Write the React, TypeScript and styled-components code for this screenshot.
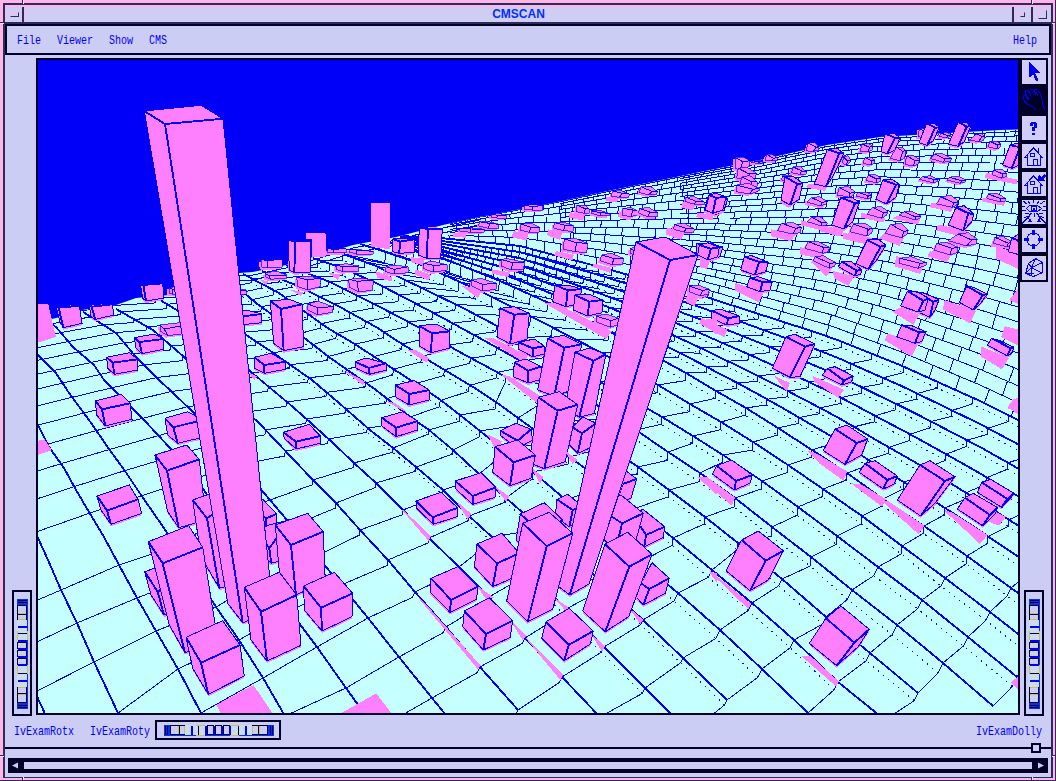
import React from "react";
import styled, { createGlobalStyle } from "styled-components";

const INK = "#000028";
const EDGE = "#2c2c5c";
const PANEL = "#cccdf5";
const ROSE = "#ffb6e6";
const BLUE = "#0000f8";
const PINK = "#ff80ff";
const ICE = "#c6ffff";

const Global = createGlobalStyle`
  * { box-sizing: border-box; }
  body { margin: 0; background: ${ROSE}; overflow: hidden; }
  svg { display: block; }
`;

const Frame = styled.div`
  position: relative;
  width: 1056px;
  height: 781px;
  padding: 3px 4px 3px 3px;
  background: ${ROSE};
  border-bottom: 1px solid ${EDGE};
  border-right: 1px solid ${EDGE};
  overflow: hidden;
`;
const Window = styled.div`
  display: flex;
  flex-direction: column;
  width: 1050px;
  height: 775px;
  border: 2px solid ${EDGE};
  border-bottom-width: 1px;
  background: ${PANEL};
`;
const Notch = styled.i<{ $x: number; $y: number; $v?: boolean }>`
  position: absolute;
  left: ${(p) => p.$x}px;
  top: ${(p) => p.$y}px;
  width: ${(p) => (p.$v ? 2 : 4)}px;
  height: ${(p) => (p.$v ? 4 : 2)}px;
  background: ${EDGE};
  border-${(p) => (p.$v ? "right" : "bottom")}: 1px solid #ffdcf4;
`;
const TitleBar = styled.header`
  display: flex;
  height: 19px;
  flex: none;
  border-top: 2px solid ${ROSE};
  border-bottom: 2px solid ${EDGE};
  background: #d0cdf4;
`;
const Title = styled.h1`
  flex: 1;
  margin: 0;
  border-left: 1px solid ${ROSE};
  text-align: center;
  font: bold 12px/14px "Liberation Sans", sans-serif;
  color: #0030ff;
`;
const TitleButton = styled.button<{ $side: "left" | "right" }>`
  display: flex;
  align-items: center;
  justify-content: center;
  width: 19px;
  padding: 0;
  background: none;
  border: 0;
  border-left: ${(p) => (p.$side === "left" ? `1px solid ${ROSE}` : `2px solid ${EDGE}`)};
  border-right: ${(p) => (p.$side === "left" ? `2px solid ${EDGE}` : "0")};
  box-shadow: ${(p) => (p.$side === "right" ? `inset 1px 0 ${ROSE}` : "none")};
  &:last-child { width: 20px; }
`;
const Bevel = styled.span<{ $w: number; $h: number }>`
  width: ${(p) => p.$w}px;
  height: ${(p) => p.$h}px;
  border: 1px solid ${ROSE};
  border-right-color: ${EDGE};
  border-bottom-color: ${EDGE};
`;
const Label = styled.span`
  font: 10px/12px "Liberation Mono", monospace;
  color: ${BLUE};
  transform: scaleY(1.28);
  white-space: pre;
`;
const MenuBar = styled.nav`
  display: flex;
  align-items: center;
  gap: 16px;
  height: 31px;
  flex: none;
  padding: 2px 12px 0 10px;
  border: 2px solid ${INK};
  ${Label}:last-child { margin-left: auto; }
`;
const Workspace = styled.main`
  display: flex;
  height: 662px;
  flex: none;
  padding: 3px 0 1px;
`;
const WheelColumn = styled.div<{ $pad: number }>`
  display: flex;
  align-items: flex-end;
  width: ${(p) => (p.$pad === 7 ? 31 : 30)}px;
  padding-left: ${(p) => p.$pad}px;
`;
const RightRail = styled.div`
  display: flex;
  flex-direction: column;
  justify-content: space-between;
  width: 30px;
`;
const Viewport = styled.div`
  width: 982px;
  height: 657px;
  border: 2px solid ${INK};
  border-right: 0;
  background: ${BLUE};
`;
const ViewEdge = styled.div`
  width: 2px;
  height: 657px;
  margin-right: -2px;
  background: ${INK};
`;
const Toolbar = styled.div`
  display: flex;
  flex-direction: column;
  gap: 4px;
  width: 30px;
  height: 224px;
  padding: 2px 2px 2px 4px;
  background: ${INK};
`;
const Tool = styled.button<{ $active?: boolean }>`
  width: 24px;
  height: 24px;
  flex: none;
  padding: 0;
  border: 0;
  background: ${(p) => (p.$active ? INK : "#d0cdf8")};
`;
const WheelBox = styled.div<{ $across?: boolean }>`
  width: ${(p) => (p.$across ? 126 : 20)}px;
  height: ${(p) => (p.$across ? 20 : 126)}px;
  flex: none;
  padding: ${(p) => (p.$across ? "3px 0 0 7px" : "7px 0 0 3px")};
  border: 2px solid ${INK};
`;
const WheelRow = styled.footer`
  display: flex;
  align-items: center;
  height: 30px;
  flex: none;
  padding: 0 9px;
  gap: 16px;
  ${WheelBox} { margin-left: -11px; margin-top: -4px; }
  ${Label} { margin-top: -1px; }
  ${Label}:last-child { margin-left: auto; }
`;
const SashLine = styled.div`
  position: relative;
  height: 2px;
  flex: none;
  background: ${INK};
`;
const SashGrip = styled.span`
  position: absolute;
  right: 10px;
  top: -4px;
  width: 10px;
  height: 10px;
  border: 2px solid ${INK};
  background: ${PANEL};
`;
const ScrollBar = styled.div`
  display: flex;
  align-items: center;
  justify-content: space-between;
  width: 1040px;
  height: 15px;
  margin: 9px 0 0 3px;
  background: ${INK};
`;
const Trough = styled.div`
  width: 1008px;
  height: 7px;
  background: ${PANEL};
`;
const Arrow = styled.svg`
  width: 16px;
  height: 15px;
  fill: ${PANEL};
`;

/* ---------- thumb wheels ---------- */

// [offset, length, colour] of each stripe across the wheel
const stripes: [number, number, string][] = [
  [0, 1, "#0030ff"], [1, 1, INK], [2, 1, "#0030ff"], [3, 1, INK], [4, 2, "#0030ff"],
  [27, 2, BLUE], [34, 1, INK], [41, 2, BLUE], [49, 2, BLUE], [57, 2, BLUE], [65, 2, BLUE], [74, 1, INK], [81, 2, BLUE],
  [104, 2, "#0030ff"], [106, 1, INK], [107, 1, "#0030ff"], [108, 1, INK], [109, 1, "#0030ff"],
];
const windows: [number, number][] = [[6, 9], [15, 5], [43, 6], [51, 6], [59, 6], [88, 6], [94, 9]];

function Wheel({ across }: { across?: boolean }) {
  const shape = (
    <>
      <rect width={11} height={110} fill="#ccdcf0" />
      <rect x={10} width={1} height={110} fill="#0030ff" />
      <rect x={0} y={0} width={1} height={6} fill="#0030ff" />
      <rect x={0} y={104} width={1} height={6} fill="#0030ff" />
      {windows.map(([y, h]) => (
        <g key={y}>
          <rect x={0} y={y} width={10} height={h + 1} fill={INK} />
          <rect x={1} y={y + 1} width={8} height={h - 1} fill={PANEL} />
        </g>
      ))}
      {[14, 20, 88, 95].map((y) => <rect key={y} x={1} y={y} width={8} height={1} fill="#cdbe5a" />)}
      {[32, 66].map((y) => (
        <g key={y} fill="#cdbe5a">
          <rect x={0} y={y} width={1} height={9} />
          <rect x={10} y={y} width={1} height={9} />
        </g>
      ))}
      {stripes.map(([y, h, c]) => <rect key={y} x={1} y={y} width={9} height={h} fill={c} />)}
    </>
  );
  return across ? (
    <svg width={110} height={11}><g transform="matrix(0 1 1 0 0 0)">{shape}</g></svg>
  ) : (
    <svg width={11} height={110}>{shape}</svg>
  );
}

/* ---------- terrain ---------- */

type P = [number, number];

// y of a polyline at x, continuing the end segments past both ends
const along = (pts: P[], x: number) => {
  let i = 1;
  while (i < pts.length - 1 && pts[i][0] < x) i++;
  const [a, b] = [pts[i - 1], pts[i]];
  return a[1] + ((x - a[0]) * (b[1] - a[1])) / (b[0] - a[0]);
};

const ridge: P[] = [
  [30, 324], [56, 318], [82, 310], [116, 305], [136, 298], [169, 295], [239, 273], [253, 272], [286, 265],
  [313, 257], [353, 245], [396, 237], [443, 225], [479, 217], [543, 205], [603, 192], [700, 172],
  [760, 160], [827, 145], [880, 137], [1000, 130], [1030, 129],
];

// Every furrow: its first crossing index, the crossings (right to left), then the path up to the ridge.
const furrows: { j: number; nodes: P[]; tail: P[] }[] = [
  { j: 4, nodes: [[57, 740], [35, 692], [20, 650], [5, 614], [-8, 582], [-20, 552], [-32, 524]], tail: [[-60, 460], [-100, 400]] },
  { j: 3, nodes: [[137, 755], [118, 713], [94, 662], [77, 623], [61, 590], [48, 560], [38, 538], [27, 510]], tail: [[0, 450], [-30, 390]] },
  { j: 3, nodes: [[201, 713], [178, 669], [156, 631], [137, 598], [119, 565], [104, 537], [89, 512], [76, 490], [64, 468], [49, 447]], tail: [[38, 425], [20, 395], [0, 360]] },
  { j: 2, nodes: [[285, 716], [263, 678], [239, 640], [216, 607], [196, 575], [176, 546], [157, 518], [139, 492], [125, 471]], tail: [[109, 449], [89, 420], [69, 393], [56, 373], [38, 355], [10, 328]] },
  { j: 1, nodes: [[376, 730], [346, 688], [317, 647], [290, 611], [266, 578], [244, 547], [223, 517], [203, 489]], tail: [[170, 448], [144, 420], [126, 402], [104, 380], [94, 365], [73, 347], [56, 327], [38, 315]] },
  { j: 0, nodes: [[467, 741], [432, 698], [399, 657], [368, 618], [341, 585], [317, 556], [292, 526], [270, 500], [249, 475]], tail: [[193, 412], [172, 392], [159, 380], [136, 357], [116, 333], [83, 312]] },
  { j: 0, nodes: [[518, 710], [480, 667], [446, 627], [415, 592], [388, 560], [360, 530], [336, 503], [313, 480], [293, 459]], tail: [[258, 422], [184, 357], [153, 330], [116, 309]] },
  { j: -1, nodes: [[600, 717], [562, 677], [525, 638], [489, 597], [459, 567], [429, 538], [403, 510], [376, 483], [354, 463], [333, 443], [312, 424]], tail: [[293, 407], [251, 372], [190, 318], [160, 300]] },
  { j: -2, nodes: [[690, 733], [645, 688], [604, 647], [566, 609], [528, 571], [492, 537], [469, 516], [443, 490], [416, 467], [393, 448], [370, 430]], tail: [[339, 403], [312, 380], [269, 350], [246, 335], [200, 300]] },
  { j: -2, nodes: [[727, 700], [683, 658], [643, 620], [605, 585], [570, 553], [537, 525], [506, 498], [479, 474], [453, 450], [429, 430], [409, 416]], tail: [[376, 390], [329, 357], [303, 337], [256, 303], [243, 292], [225, 280]] },
  { j: -3, nodes: [[808, 713], [762, 669], [720, 630], [678, 593], [640, 562], [603, 531], [566, 500], [533, 472], [503, 449], [480, 431], [460, 415], [438, 398]], tail: [[398, 372], [353, 343], [326, 327], [279, 293], [243, 274]] },
  { j: -4, nodes: [[885, 720], [838, 682], [794, 640], [752, 603], [712, 570], [673, 538], [636, 508], [602, 480], [569, 457], [543, 436], [518, 418], [496, 402], [473, 387]], tail: [[428, 360], [399, 342], [376, 327], [340, 307], [300, 287], [262, 271]] },
  { j: -4, nodes: [[918, 693], [870, 653], [826, 617], [782, 579], [738, 543], [705, 517], [669, 490], [638, 467], [602, 442], [570, 421], [539, 400], [506, 377]], tail: [[456, 350], [433, 335], [401, 318], [376, 305], [330, 282], [286, 265]] },
  { j: -5, nodes: [[993, 706], [943, 663], [897, 625], [852, 590], [811, 557], [772, 527], [735, 498], [700, 473], [668, 452], [636, 430], [605, 410], [575, 392], [546, 375]], tail: [[519, 360], [494, 346], [443, 318], [409, 300], [376, 283], [345, 269], [313, 258]] },
  { j: -5, nodes: [[1017, 677], [968, 637], [922, 600], [878, 567], [837, 536], [798, 507], [762, 481], [723, 455], [693, 436], [662, 417], [631, 399], [600, 382], [571, 366]], tail: [[499, 327], [463, 308], [426, 290], [376, 266], [335, 251]] },
  { j: -5, nodes: [[1036, 648], [990, 612], [945, 578], [902, 546], [862, 516], [823, 489], [788, 465], [753, 442], [721, 422], [690, 404], [658, 385]], tail: [[600, 352], [540, 321], [480, 291], [440, 273], [400, 256], [360, 244]] },
  { j: -5, nodes: [[1056, 620], [1011, 588], [967, 556], [924, 526], [883, 499], [847, 473], [812, 450], [778, 428], [746, 408], [716, 391], [686, 373]], tail: [[620, 337], [560, 308], [500, 281], [440, 257], [380, 240]] },
];

const shelf: P[] = [[400, 236], [440, 238], [520, 246], [600, 267], [700, 295], [830, 337], [900, 365], [980, 401], [1040, 431]];

const LEFT_SIDE = 14;
const LAST_PLOTTED = 7;
const lines = furrows.map((f, i) => {
  const path = [...f.nodes, ...f.tail].sort((a, b) => a[0] - b[0]) as P[];
  const nodes = f.nodes.filter((_, k) => f.j + k <= LAST_PLOTTED);
  if (i >= LEFT_SIDE) {
    const end = path[0][0];
    let step = nodes[nodes.length - 2][0] - nodes[nodes.length - 1][0];
    let x = nodes[nodes.length - 1][0];
    while (nodes.length < 60) {
      step = Math.max(step * 0.925, 6.5);
      x -= step;
      if (x < end) break;
      nodes.push([x, along(path, x)]);
    }
  }
  return { j: f.j, path, nodes };
});
// Left of the hill every cross line runs on, falling gently, from the furrow on its right.
for (let i = LEFT_SIDE - 1; i >= 0; i--) {
  const own = lines[i];
  const from = lines[i + 1];
  for (let k = own.nodes.length; k < 60; k++) {
    const start = from.nodes[k + own.j - from.j];
    if (!start) break;
    let [x, y] = start;
    const gap = along(own.path, x) - y;
    if (i > 8) y += gap * 0.22;
    while (x > -160 && along(own.path, x) > y) {
      x -= 1;
      y += Math.max(0.12, 0.15 + ((y - 290) / 310) * 0.27);
    }
    own.nodes.push([x, y]);
  }
}
const edge = lines[16];
[0.21, 0.39, 0.56, 0.72, 0.86, 1].forEach((t, n) => {
  const path: P[] = [];
  for (let x = 400; x <= 1040; x += 20) path.push([x, along(edge.path, x) * (1 - t) + along(shelf, x) * t]);
  const nodes = edge.nodes
    .map(([x]) => x + (n + 1) * 21)
    .filter((x) => x > 410)
    .map((x) => [x, along(path, x)] as P);
  lines.push({ j: edge.j, path, nodes });
});

const poly = (pts: P[]) => "M" + pts.map((p) => `${p[0].toFixed(1)} ${p[1].toFixed(1)}`).join("L");

let boldLines = "";
let thinLines = "";
let dotLines = "";
lines.forEach((l, i) => {
  boldLines += poly(l.path);
  const next = lines[i + 1];
  if (!next) return;
  const dots: P[] = [];
  l.nodes.forEach((a, k) => {
    const b = next.nodes[k + l.j - next.j];
    if (!b) return;
    if (i < 5) {
      thinLines += poly([a, b]);
      return;
    }
    const d = Math.hypot(b[0] - a[0], b[1] - a[1]) * (i > 11 ? 0.25 : i > 8 ? 0.18 : 0.1);
    const kink: P = [b[0] - d * (b[1] > 560 ? 0.5 : 0.1), b[1] + d];
    thinLines += poly([a, kink, b]);
    dots.push(kink);
  });
  if (i >= 7 && dots.length > 1) dotLines += poly(dots);
});

// Brick courses between the shelf and the ridge; fewer of them where they crowd together
const ROWS = 25;
const courseY = (n: number, x: number) => {
  const r = along(ridge, x);
  return r + (along(shelf, x) - r) * Math.pow(1 - n / ROWS, 1.5);
};
const courseStart = (n: number) => (n % 2 ? 680 : n % 4 === 2 ? 560 : 450);
let courses = "";
for (let n = 0; n < ROWS; n++) {
  const pts: P[] = [];
  for (let x = courseStart(n); x <= 1030; x += 10) pts.push([x, courseY(n, x)]);
  courses += poly(pts);
  let x = courseStart(n) + ((n * 37) % 19);
  while (x < 1018) {
    const t = 1 - n / ROWS;
    const lean = (x - 560) * 0.012 * t;
    const up = x > 690 ? 1 : x > 570 ? 2 : 4;
    courses += poly([[x, courseY(n, x)], [x + lean, courseY(Math.min(n + up, ROWS), x + lean)]]);
    x += 8 + 13 * t * ((x - 260) / 500) + ((n * 7 + Math.round(x)) % 4);
  }
}
let skyline = "";
for (let n = 0; n < 2; n++) {
  skyline += poly(ridge.filter((p) => p[0] < 480 && p[0] > 230).map(([x, y]) => [x, y + 3 + n * 5] as P));
}

/* ---------- blocks: measured in thirds of a pixel from a patch corner ---------- */

// left, back, right and front corners of the lid, then the left, front and right feet
type Block = number[];
interface Patch { x: number; y: number; shadows: number[][]; blocks: Block[] }

const horizonPatch: Patch = {
  x: 36, y: 190,
  shadows: [[0, 345, 35, 342, 58, 440, 0, 458], [0, 755, 25, 750, 45, 780, 0, 795], [930, 545, 985, 575, 980, 583], [640, 550, 660, 560, 655, 567], [880, 250, 912, 255, 905, 268], [675, 270, 695, 276, 690, 284], [765, 300, 800, 308, 795, 316], [757, 150, 824, 153, 824, 240, 757, 240], [812, 130, 868, 132, 868, 198, 830, 200, 830, 145, 812, 145], [1005, 41, 1059, 41, 1059, 165, 1005, 170]],
  blocks: [
    [675, 209, 690, 209, 738, 209, 693, 211, 677, 232, 693, 234, 738, 232],
    [875, 176, 892, 176, 930, 176, 892, 178, 875, 188, 892, 189, 930, 188],
    [940, 178, 960, 178, 1012, 184, 960, 180, 940, 186, 960, 192, 1012, 192],
    [60, 350, 120, 343, 130, 347, 68, 353, 72, 395, 82, 413, 138, 400],
    [160, 345, 220, 340, 229, 343, 167, 350, 165, 380, 178, 388, 234, 375],
    [313, 283, 365, 278, 380, 280, 322, 285, 320, 325, 330, 333, 384, 324],
    [400, 292, 420, 290, 440, 293, 410, 298, 400, 310, 410, 313, 440, 313],
    [600, 298, 620, 297, 630, 300, 610, 304, 600, 315, 612, 316, 630, 312],
    [757, 150, 778, 150, 824, 153, 778, 154, 760, 240, 775, 248, 824, 246],
    [687, 250, 720, 243, 752, 255, 700, 258, 690, 262, 703, 268, 752, 264],
    [782, 262, 810, 258, 854, 264, 815, 270, 785, 290, 815, 300, 853, 290],
    [900, 225, 930, 221, 968, 228, 920, 230, 900, 238, 920, 245, 968, 243],
    [938, 268, 975, 264, 1012, 270, 963, 274, 940, 292, 968, 306, 1010, 300],
    [815, 342, 845, 334, 892, 350, 845, 353, 815, 360, 845, 374, 890, 367],
    [372, 405, 430, 398, 450, 405, 385, 417, 375, 425, 395, 437, 450, 430],
    [295, 443, 355, 432, 382, 447, 310, 456, 300, 475, 318, 491, 382, 478],
    [212, 502, 280, 488, 305, 508, 230, 518, 215, 535, 235, 553, 305, 540],
    [600, 370, 630, 360, 677, 372, 610, 380, 600, 395, 610, 405, 677, 398],
    [703, 333, 760, 328, 798, 343, 735, 357, 713, 460, 743, 482, 803, 470],
    [655, 502, 705, 490, 750, 515, 685, 525, 655, 535, 685, 550, 748, 538],
    [958, 515, 990, 504, 1050, 520, 998, 534, 960, 535, 1000, 553, 1052, 540],
    [178, 633, 255, 613, 282, 640, 198, 658, 182, 675, 208, 708, 288, 688],
    [387, 685, 455, 665, 500, 690, 412, 712, 395, 735, 425, 760, 500, 742],
    [742, 727, 820, 703, 853, 738, 780, 755, 745, 745, 780, 777, 853, 760],
  ],
};
const middlePatch: Patch = {
  x: 376, y: 190,
  shadows: [
    [330, 445, 350, 445, 453, 498, 445, 516], [378, 555, 400, 560, 490, 618, 480, 635], [510, 340, 535, 340, 705, 425, 690, 445],
    [262, 290, 285, 293, 312, 308, 305, 322], [120, 240, 163, 255, 158, 270, 118, 252], [105, 203, 145, 208, 140, 224, 105, 215],
    [97, 480, 120, 482, 158, 505, 150, 515], [35, 635, 60, 642, 90, 665], [335, 735, 375, 755, 368, 775], [415, 125, 455, 133, 450, 150, 408, 140],
    [518, 120, 558, 130, 550, 147, 515, 135], [540, 185, 592, 195, 588, 210, 536, 195], [655, 222, 705, 235, 700, 246, 650, 230],
    [935, 313, 965, 322, 955, 347, 930, 335], [975, 393, 1020, 385, 1020, 430], [235, 130, 270, 130, 268, 142, 232, 138],
    [350, 240, 400, 248, 395, 260, 350, 250], [0, 245, 45, 262, 45, 272, 5, 262], [875, 115, 925, 125, 915, 148, 870, 132],
    [583, 68, 625, 74, 620, 90, 580, 82], [730, 65, 765, 78, 762, 90, 728, 80], [920, 40, 955, 48, 950, 60, 918, 52], [690, 22, 725, 25, 722, 35, 690, 32],
    [965, 70, 1010, 75, 1010, 90, 962, 80], [6, 41, 40, 42, 40, 176, 5, 172], [130, 111, 198, 115, 196, 190, 128, 190],
  ],
  blocks: [
    [50, 147, 75, 145, 114, 148, 72, 155, 50, 185, 70, 190, 114, 187],
    [130, 112, 155, 114, 199, 116, 156, 118, 127, 195, 152, 205, 194, 205],
    [345, 72, 365, 70, 390, 76, 365, 76, 345, 82, 362, 84, 390, 84],
    [445, 45, 465, 44, 500, 46, 470, 50, 445, 58, 468, 60, 500, 60],
    [310, 95, 335, 94, 368, 103, 340, 100, 308, 108, 338, 115, 368, 114],
    [250, 115, 280, 113, 325, 118, 285, 117, 252, 124, 284, 127, 325, 126],
    [435, 102, 465, 100, 492, 112, 465, 112, 432, 120, 460, 127, 490, 126],
    [535, 98, 562, 96, 592, 106, 568, 106, 533, 115, 562, 122, 592, 124],
    [603, 46, 625, 45, 640, 57, 628, 56, 600, 65, 625, 70, 640, 70],
    [645, 62, 670, 60, 700, 70, 672, 68, 645, 70, 672, 77, 700, 78],
    [740, 55, 765, 53, 785, 62, 770, 60, 738, 75, 765, 80, 785, 74],
    [790, 55, 820, 53, 845, 68, 822, 66, 788, 70, 815, 80, 843, 80],
    [710, 3, 735, 2, 760, 12, 740, 10, 705, 18, 730, 22, 758, 22],
    [795, -10, 825, -10, 845, 5, 830, 5, 790, 8, 815, 14, 842, 12],
    [930, 22, 955, 20, 985, 35, 960, 34, 928, 35, 955, 42, 985, 44],
    [1000, 15, 1020, 10, 1050, 20, 1020, 24, 988, 60, 1010, 70, 1040, 60],
    [895, 103, 925, 100, 955, 117, 930, 115, 893, 118, 925, 126, 953, 127],
    [565, 147, 600, 146, 635, 160, 602, 158, 562, 178, 597, 185, 632, 188],
    [677, 195, 705, 190, 743, 205, 712, 205, 672, 212, 710, 225, 740, 222],
    [762, 175, 785, 172, 800, 185, 780, 185, 762, 190, 775, 195, 798, 198],
    [30, 230, 50, 225, 97, 230, 55, 238, 28, 245, 55, 252, 97, 248],
    [143, 220, 168, 213, 213, 224, 172, 226, 143, 236, 172, 246, 213, 241],
    [375, 208, 395, 206, 445, 217, 410, 218, 375, 228, 405, 240, 443, 238],
    [287, 270, 315, 265, 362, 280, 320, 283, 287, 288, 318, 303, 360, 298],
    [537, 285, 575, 285, 617, 297, 575, 301, 530, 335, 570, 350, 610, 340],
    [597, 315, 640, 313, 680, 330, 640, 335, 592, 360, 635, 378, 678, 368],
    [660, 378, 690, 372, 728, 385, 705, 392, 660, 395, 703, 412, 725, 405],
    [130, 407, 180, 402, 222, 424, 168, 430, 130, 468, 165, 488, 220, 475],
    [372, 355, 415, 350, 460, 370, 415, 374, 363, 440, 402, 462, 453, 448],
    [428, 457, 475, 447, 505, 468, 470, 475, 428, 478, 470, 500, 505, 492],
    [415, 517, 450, 507, 495, 530, 457, 542, 412, 560, 457, 579, 495, 568],
    [515, 445, 562, 436, 617, 463, 565, 473, 485, 600, 535, 618, 590, 600],
    [597, 487, 640, 474, 690, 493, 652, 512, 568, 650, 610, 682, 655, 670],
    [590, 712, 620, 680, 660, 700, 618, 730, 580, 765, 605, 790, 650, 770],
    [373, 722, 420, 700, 465, 718, 425, 752, 375, 738, 425, 775, 470, 750],
    [487, 622, 550, 605, 605, 644, 545, 662, 460, 818, 505, 836, 568, 815],
    [58, 585, 115, 572, 160, 600, 100, 612, 60, 622, 100, 645, 160, 630],
    [17, 683, 80, 665, 125, 693, 60, 713, 18, 708, 60, 740, 125, 720],
    [940, 288, 965, 285, 1000, 297, 980, 302, 940, 305, 972, 318, 998, 312],
    [970, 165, 995, 158, 1030, 172, 1005, 176, 965, 195, 995, 210, 1025, 200],
  ],
};
const rightPatch: Patch = {
  x: 700, y: 110,
  shadows: [
    [105, 520, 190, 548, 175, 575, 105, 540], [215, 360, 285, 372, 272, 392, 215, 378], [300, 412, 370, 435, 362, 445, 302, 432],
    [335, 455, 392, 480, 378, 498], [400, 485, 460, 500, 445, 525, 405, 505], [430, 370, 515, 385, 500, 402, 430, 385],
    [550, 375, 610, 385, 598, 406, 540, 385], [360, 345, 430, 362, 420, 378, 360, 362], [600, 595, 655, 615, 640, 643, 580, 605],
    [565, 672, 650, 705, 635, 738, 555, 690], [735, 572, 825, 605, 810, 638, 730, 598], [845, 712, 925, 745, 905, 776, 843, 738],
    [715, 345, 800, 365, 790, 380, 712, 360], [690, 425, 750, 438, 740, 455, 685, 438], [590, 440, 670, 462, 660, 490, 585, 468],
    [340, 800, 430, 840, 415, 862, 345, 815], [5, 625, 80, 660, 72, 680, 0, 640], [225, 800, 268, 820, 260, 842], [890, 410, 953, 435, 953, 475, 890, 445],
    [915, 650, 953, 660, 953, 705, 905, 680], [930, 570, 953, 540, 953, 580], [0, 445, 28, 455, 20, 475, 0, 470], [940, 870, 953, 865, 953, 900, 925, 895],
    [485, 310, 555, 325, 548, 336, 485, 322], [315, 275, 372, 285, 368, 293, 315, 284], [240, 275, 270, 285, 265, 292],
    [860, 190, 950, 210, 950, 222, 855, 203], [325, 222, 378, 232, 375, 241, 322, 232], [415, 252, 460, 262, 410, 262], [595, 318, 660, 330, 650, 342, 582, 325],
    [305, 333, 372, 350, 365, 360, 305, 345], [695, 280, 760, 292, 752, 304, 690, 290], [850, 265, 915, 275, 910, 286, 848, 273], [880, 395, 930, 408, 925, 415, 872, 408],
  ],
  blocks: [
    [105, 142, 130, 141, 150, 152, 128, 155, 105, 175, 120, 180, 148, 170],
    [115, 175, 140, 172, 170, 190, 148, 192, 110, 205, 140, 210, 165, 205],
    [125, 200, 150, 197, 172, 215, 155, 215, 120, 222, 150, 230, 172, 228],
    [110, 225, 145, 220, 178, 235, 158, 238, 108, 245, 150, 252, 178, 242],
    [200, 133, 215, 132, 232, 143, 220, 145, 195, 150, 215, 153, 232, 152],
    [158, 152, 180, 150, 188, 155, 178, 156, 155, 158, 175, 160, 188, 160],
    [325, 99, 345, 98, 357, 110, 348, 112, 318, 122, 340, 125, 356, 120],
    [487, 102, 505, 100, 518, 108, 508, 112, 480, 123, 505, 126, 516, 120],
    [495, 143, 512, 142, 525, 150, 515, 152, 488, 160, 515, 165, 522, 160],
    [722, 68, 740, 67, 752, 74, 742, 77, 718, 80, 740, 83, 750, 80],
    [658, 55, 668, 54, 678, 62, 670, 62, 655, 80, 665, 82, 675, 78],
    [830, 72, 845, 71, 855, 80, 847, 80, 808, 90, 835, 95, 850, 92],
    [870, 94, 890, 93, 903, 103, 893, 105, 865, 110, 890, 117, 900, 112],
    [705, 132, 725, 130, 755, 145, 735, 147, 690, 145, 730, 157, 752, 154],
    [620, 137, 640, 136, 660, 150, 645, 152, 615, 163, 640, 168, 655, 162],
    [555, 70, 584, 70, 600, 84, 585, 84, 543, 125, 562, 131, 585, 120],
    [590, 112, 608, 112, 618, 122, 608, 124, 570, 145, 600, 152, 614, 145],
    [680, 40, 704, 40, 718, 52, 705, 53, 657, 98, 682, 106, 700, 92],
    [775, 36, 799, 36, 813, 48, 800, 50, 745, 103, 775, 109, 792, 96],
    [930, 105, 950, 100, 990, 110, 960, 112, 908, 165, 935, 175, 970, 160],
    [882, 180, 905, 178, 920, 190, 908, 192, 875, 193, 905, 205, 918, 200],
    [668, 200, 690, 197, 715, 208, 700, 208, 658, 208, 700, 218, 712, 215],
    [748, 202, 775, 198, 797, 210, 785, 212, 740, 210, 780, 220, 795, 216],
    [278, 170, 300, 168, 320, 186, 305, 183, 275, 188, 300, 193, 318, 192],
    [247, 198, 270, 195, 285, 205, 275, 208, 245, 210, 275, 215, 285, 212],
    [430, 140, 445, 137, 452, 150, 442, 152, 428, 160, 440, 165, 452, 155],
    [382, 118, 412, 116, 432, 130, 418, 130, 343, 222, 378, 230, 398, 200],
    [505, 195, 525, 193, 543, 205, 530, 207, 498, 212, 528, 218, 540, 215],
    [255, 200, 278, 198, 308, 220, 292, 222, 243, 270, 270, 285, 298, 268],
    [548, 210, 575, 208, 598, 222, 588, 224, 528, 268, 560, 282, 588, 262],
    [418, 232, 445, 230, 465, 245, 450, 250, 412, 255, 448, 262, 460, 255],
    [475, 247, 498, 246, 515, 255, 505, 257, 468, 258, 502, 266, 513, 263],
    [335, 263, 360, 260, 382, 275, 365, 277, 320, 276, 362, 288, 378, 282],
    [518, 292, 545, 290, 565, 305, 550, 308, 500, 312, 545, 325, 560, 315],
    [612, 305, 635, 303, 662, 318, 645, 320, 598, 315, 645, 330, 660, 325],
    [722, 260, 755, 256, 775, 275, 760, 278, 710, 282, 758, 292, 770, 285],
    [865, 252, 890, 250, 917, 265, 902, 266, 860, 265, 902, 276, 915, 273],
    [25, 257, 58, 255, 83, 268, 68, 268, 12, 302, 45, 315, 72, 302],
    [422, 262, 455, 262, 478, 277, 465, 280, 395, 345, 432, 357, 458, 335],
    [335, 322, 360, 320, 382, 338, 365, 338, 322, 335, 365, 348, 380, 345],
    [245, 340, 280, 338, 305, 352, 287, 355, 232, 362, 280, 372, 300, 368],
    [460, 342, 495, 340, 518, 355, 505, 358, 450, 365, 500, 378, 515, 370],
    [572, 343, 605, 341, 625, 360, 612, 365, 555, 370, 605, 383, 622, 372],
    [768, 292, 792, 287, 822, 312, 805, 310, 745, 345, 790, 362, 815, 335],
    [775, 372, 805, 368, 832, 388, 815, 390, 745, 392, 800, 408, 828, 402],
    [710, 400, 740, 397, 775, 412, 755, 415, 702, 420, 750, 435, 770, 428],
    [325, 395, 350, 393, 388, 412, 370, 412, 315, 415, 368, 430, 385, 425],
    [345, 440, 370, 437, 408, 458, 390, 460, 340, 452, 388, 475, 404, 468],
    [425, 455, 455, 455, 485, 480, 470, 482, 415, 470, 465, 498, 482, 492],
    [502, 390, 535, 388, 558, 405, 542, 410, 467, 460, 505, 478, 530, 450],
    [600, 445, 635, 440, 680, 458, 660, 460, 598, 460, 655, 475, 678, 465],
    [885, 382, 910, 380, 935, 395, 925, 400, 880, 400, 922, 410, 932, 405],
    [935, 385, 960, 370, 980, 380, 955, 390, 925, 425, 960, 435, 975, 410],
    [-10, 400, 35, 400, 68, 412, 42, 413, -10, 435, 33, 448, 60, 440],
    [133, 440, 155, 437, 205, 457, 178, 456, 122, 480, 165, 495, 197, 485],
    [150, 503, 175, 500, 217, 515, 188, 516, 140, 530, 180, 545, 210, 540],
    [-10, 535, 5, 535, 28, 545, 10, 547, -10, 555, 10, 562, 26, 555],
    [35, 602, 60, 597, 118, 618, 85, 625, 35, 625, 80, 645, 118, 640],
    [650, 545, 675, 550, 717, 570, 700, 575, 640, 600, 690, 622, 705, 600],
    [622, 543, 655, 547, 685, 565, 670, 572, 602, 588, 655, 606, 675, 600],
    [605, 645, 635, 647, 678, 665, 658, 667, 590, 680, 645, 700, 665, 695],
    [800, 528, 820, 532, 862, 552, 848, 556, 778, 577, 820, 600, 842, 580],
    [875, 685, 895, 690, 942, 712, 932, 715, 862, 705, 922, 738, 935, 730],
    [258, 680, 285, 673, 345, 702, 315, 710, 217, 775, 270, 802, 300, 800],
    [382, 775, 405, 770, 460, 798, 432, 812, 367, 795, 425, 825, 455, 815],
  ],
};
const slopePatch: Patch = {
  x: 700, y: 400,
  shadows: [
    [0, 232, 20, 232, 103, 293, 95, 315], [328, 155, 345, 160, 440, 215, 430, 240, 360, 190], [458, 252, 480, 253, 556, 298, 545, 318],
    [550, 305, 565, 305, 672, 378, 655, 400], [735, 332, 755, 338, 860, 405, 840, 430], [870, 365, 890, 340, 915, 350, 897, 375],
    [30, 515, 50, 530, 152, 612, 145, 625], [306, 768, 330, 768, 415, 845, 408, 857], [925, 20, 940, 0, 955, -5, 955, 42], [935, 848, 955, 830, 955, 868],
  ],
  blocks: [
    [405, 87, 440, 75, 503, 117, 470, 129, 370, 152, 435, 193, 485, 165],
    [50, 197, 95, 180, 157, 225, 108, 243, 37, 222, 103, 270, 150, 250],
    [495, 190, 525, 182, 592, 228, 562, 240, 478, 217, 550, 267, 583, 252],
    [660, 195, 690, 182, 765, 230, 735, 243, 592, 300, 662, 348, 705, 310],
    [845, 247, 872, 238, 942, 280, 922, 297, 832, 277, 905, 322, 935, 290],
    [795, 293, 820, 280, 893, 323, 870, 345, 772, 327, 848, 377, 885, 343],
    [125, 420, 175, 393, 250, 452, 197, 482, 78, 512, 150, 572, 205, 540],
    [378, 655, 423, 618, 508, 688, 463, 728, 328, 730, 410, 797, 475, 740],
  ],
};
const frontPatch: Patch = {
  x: 376, y: 440,
  shadows: [
    [80, 210, 163, 288, 157, 300], [130, 475, 150, 495, 313, 678, 305, 685], [450, 593, 560, 705, 553, 718], [305, 440, 350, 472, 330, 475],
    [410, 550, 450, 588, 440, 598], [650, 588, 685, 618, 678, 632], [765, 510, 800, 540, 793, 550], [540, 478, 578, 505, 570, 512],
    [360, 143, 398, 170, 390, 182], [245, 188, 284, 222, 275, 235], [470, 88, 500, 112, 493, 128], [570, 35, 602, 60, 590, 70],
    [965, 110, 1020, 140, 1020, 160], [345, 0, 375, 18, 357, 22], [-102, 820, 0, 762, 45, 820], [1003, 398, 1020, 400, 1020, 422],
  ],
  blocks: [
    [357, 20, 425, 0, 478, 45, 413, 67, 350, 97, 402, 137, 465, 115],
    [238, 123, 315, 98, 360, 142, 290, 168, 240, 148, 290, 193, 357, 172],
    [120, 183, 195, 157, 245, 203, 170, 232, 120, 203, 172, 253, 243, 230],
    [543, 178, 575, 163, 620, 200, 590, 210, 538, 230, 580, 260, 610, 240],
    [433, 222, 505, 188, 560, 240, 500, 280, 420, 300, 480, 350, 540, 300],
    [710, 115, 750, 92, 782, 117, 740, 132, 695, 160, 720, 190, 765, 175],
    [775, 228, 800, 207, 866, 260, 810, 285, 765, 285, 805, 320, 862, 292],
    [670, 205, 735, 165, 802, 220, 738, 250, 650, 270, 720, 330, 780, 300],
    [303, 312, 378, 280, 430, 340, 363, 370, 295, 380, 350, 440, 415, 412],
  ],
};
const cornerPatch: Patch = {
  x: 36, y: 440,
  shadows: [[543, 795, 652, 737, 708, 820, 555, 820]],
  blocks: [
    [183, 168, 280, 135, 306, 178, 213, 212, 195, 210, 225, 253, 317, 220],
    [357, 45, 452, 15, 490, 58, 393, 92, 395, 215, 428, 263, 510, 240],
    [470, 180, 520, 162, 560, 200, 513, 235, 495, 350, 550, 445, 600, 430],
    [640, 200, 680, 178, 722, 222, 690, 235, 640, 260, 690, 260, 720, 300],
    [660, 270, 700, 255, 760, 240, 700, 325, 660, 325, 706, 370, 740, 360],
    [326, 395, 360, 383, 400, 430, 365, 455, 345, 465, 384, 525, 420, 515],
  ],
};
const towers: Patch = {
  x: 0, y: 0,
  shadows: [[436, 334, 603, 319, 666, 355, 666, 400, 450, 400]],
  blocks: [
    [433, 333, 603, 316, 669, 356, 495, 372, 683, 1810, 728, 1868, 820, 1835],
    [1908, 726, 1995, 711, 2094, 765, 2010, 780, 1676, 1760, 1709, 1785, 1767, 1752],
  ],
};
const foreground: Patch = {
  x: 36, y: 440,
  shadows: [],
  blocks: [
    [337, 305, 458, 257, 500, 322, 380, 370, 400, 555, 447, 638, 545, 600],
    [718, 255, 815, 220, 862, 275, 765, 315, 730, 395, 780, 465, 868, 425],
    [625, 442, 730, 397, 782, 465, 675, 515, 645, 600, 693, 663, 795, 616],
    [803, 438, 895, 397, 950, 460, 855, 503, 805, 510, 858, 573, 948, 530],
    [450, 592, 560, 542, 612, 615, 495, 668, 470, 685, 517, 763, 625, 708],
    [1815, 430, 1848, 368, 1900, 415, 1840, 447, 1790, 460, 1822, 495, 1888, 460],
    [1460, 250, 1540, 217, 1610, 280, 1532, 318, 1412, 483, 1475, 545, 1550, 508],
    [1707, 312, 1775, 277, 1848, 343, 1780, 380, 1640, 513, 1708, 575, 1778, 530],
    [1185, 415, 1265, 380, 1325, 440, 1245, 480, 1183, 457, 1242, 517, 1322, 478],
    [1285, 513, 1360, 473, 1430, 542, 1350, 582, 1280, 560, 1342, 630, 1423, 592],
    [1530, 545, 1600, 505, 1672, 573, 1598, 615, 1517, 595, 1585, 662, 1663, 612],
  ],
};

function PatchView({ patch }: { patch: Patch }) {
  const at = (v: number[], i: number): P => [patch.x + v[i * 2] / 3, patch.y + v[i * 2 + 1] / 3];
  return (
    <>
      {patch.shadows.map((s, n) => (
        <path key={`s${n}`} d={poly(s.slice(0, s.length / 2).map((_, i) => at(s, i))) + "Z"} fill={PINK} stroke={PINK} />
      ))}
      {patch.blocks.map((b, n) => {
        const [l, k, r, f, lb, fb, rb] = [0, 1, 2, 3, 4, 5, 6].map((i) => at(b, i));
        const outline = poly([l, k, r, rb, fb, lb]) + "Z";
        const big = fb[1] - k[1] > 14;
        return (
          <g key={n}>
            <path d={outline} fill={PINK} transform={big ? "translate(0 2)" : "translate(-2 2)"} />
            <path d={outline} fill={PINK} stroke={BLUE} strokeWidth={big ? 1 : 0.7} />
            <path d={poly([l, f, r]) + poly([f, fb])} fill="none" stroke={BLUE} strokeWidth={big ? 1.9 : 1} />
          </g>
        );
      })}
    </>
  );
}

function Scene() {
  return (
    <svg width={980} height={653} viewBox="38 60 980 653" shapeRendering="crispEdges">
      <rect x={38} y={60} width={980} height={653} fill={BLUE} />
      <clipPath id="ground"><path d={poly([...ridge, [1030, 720], [30, 720]]) + "Z"} /></clipPath>
      <g clipPath="url(#ground)" fill="none" stroke={BLUE}>
        <rect x={38} y={60} width={980} height={653} fill={ICE} stroke="none" />
        <path d={courses} />
        <path d={skyline} />
        <path d={thinLines} />
        <path d={dotLines} strokeDasharray="1.5 5" />
        <path d={boldLines} strokeWidth={1.9} />
      </g>
      {[horizonPatch, rightPatch, middlePatch, slopePatch, frontPatch, cornerPatch, towers, foreground].map((p, i) => (
        <PatchView key={i} patch={p} />
      ))}
    </svg>
  );
}

/* ---------- tool icons ---------- */

const house = "M2.500 13.500l9-9.500 9 9.500M5.500 11v10.500h13V11M16.500 4v5M8.500 9.500h4v3h-4zM11.500 21.500v-6h4v6M2 13.500h4M18 13.500h3";

const icons: { name: string; art: React.ReactNode }[] = [
  { name: "pick", art: <path d="M7 2v15h1l3-3 3 7h2v-2l-3-6h5v-1z" fill={BLUE} /> },
  { name: "view", art: <path d="M14 22l-3-3-6-3-3-4-1-3 1-2 2 1 2 4 1-1-4-6 1-3 2 1 3 5-2-5 2-2 2 1 3 5-2-5 2-1 4 4 2 6 1 6 2 5M14 4l2 4" /> },
  { name: "help", art: <path d="M8 7h3v3H8zM9 6h5v2H9zM12 7h3v5h-3zM10 11h4v1h-1v3h-3zM10 17h3v2h-3z" fill={BLUE} /> },
  { name: "home", art: <path d={house} /> },
  { name: "set home", art: <><path d={house} /><path d="M17 3v6h6l-2-2 3-3-2-2-3 3z" fill={BLUE} stroke="none" /></> },
  {
    name: "view all",
    art: (
      <>
        <path d="M4.500 8.500l3-3h8l4 3-4 3h-8zM9.500 6.500h5v4h-5zM1 1l4 3M6 1l2 3M11.500 0v3M17 1l-2 3M23 1l-5 3M0 6.500h3M21 6.500h3M0 11l4-1M24 11l-4-1" />
        <path d="M9 13l-3 5-6 5M15 13l3 5 6 5" strokeWidth={1.6} />
        <path d="M3 14l4-1M21 14l-4-1M2 18l4-2M22 18l-4-2M12 13v4" />
        <path d="M11 8h2v2h-2zM6 22l2-4 2 4zM15 22l2-4 2 4z" fill={BLUE} stroke="none" />
      </>
    ),
  },
  { name: "seek", art: <><path d="M11.500 4.500l5 2 2 5-2 5-5 2-5-2-2-5 2-5z" /><path d="M10 2h3v5h-3zM10 16h3v5h-3zM2 10h5v3H2zM16 10h5v3h-5z" fill={BLUE} stroke="none" /></> },
  { name: "camera", art: <path d="M3.500 17.500l3-10 7-5 7 4v10l-9 4zM13.500 2.500l-4 9 11 6M6.500 7.500l3 4M3.500 17.500l6-6v7M9.500 11.500l11-5M3.500 17.500h8" /> },
];

export default function App() {
  return (
    <Frame>
      <Global />
      <Window>
        <TitleBar>
          <TitleButton $side="left" aria-label="Window menu"><Bevel $w={9} $h={5} /></TitleButton>
          <Title>CMSCAN</Title>
          <TitleButton $side="right" aria-label="Minimize"><Bevel $w={5} $h={5} /></TitleButton>
          <TitleButton $side="right" aria-label="Maximize"><Bevel $w={9} $h={9} /></TitleButton>
        </TitleBar>
        <MenuBar>
          <Label>File</Label>
          <Label>Viewer</Label>
          <Label>Show</Label>
          <Label>CMS</Label>
          <Label>Help</Label>
        </MenuBar>
        <Workspace>
          <WheelColumn $pad={7}><WheelBox><Wheel /></WheelBox></WheelColumn>
          <Viewport><Scene /></Viewport>
          <ViewEdge />
          <RightRail>
            <Toolbar>
              {icons.map((icon) => (
                <Tool key={icon.name} $active={icon.name === "view"} aria-label={icon.name}>
                  <svg width={24} height={24} fill="none" stroke={icon.name === "help" || icon.name === "pick" ? "none" : BLUE} shapeRendering="crispEdges">
                    {icon.art}
                  </svg>
                </Tool>
              ))}
            </Toolbar>
            <WheelColumn $pad={6}><WheelBox><Wheel /></WheelBox></WheelColumn>
          </RightRail>
        </Workspace>
        <WheelRow>
          <Label>IvExamRotx</Label>
          <Label>IvExamRoty</Label>
          <WheelBox $across><Wheel across /></WheelBox>
          <Label>IvExamDolly</Label>
        </WheelRow>
        <SashLine><SashGrip /></SashLine>
        <ScrollBar>
          <Arrow><path d="M4 7.500l6-3v6z" /></Arrow>
          <Trough />
          <Arrow><path d="M12 7.500l-6-3v6z" /></Arrow>
        </ScrollBar>
      </Window>
      <Notch $x={22} $y={0} $v />
      <Notch $x={1031} $y={0} $v />
      <Notch $x={0} $y={22} />
      <Notch $x={1052} $y={22} />
      <Notch $x={0} $y={755} />
      <Notch $x={1052} $y={755} />
      <Notch $x={22} $y={777} $v />
      <Notch $x={1031} $y={777} $v />
    </Frame>
  );
}
